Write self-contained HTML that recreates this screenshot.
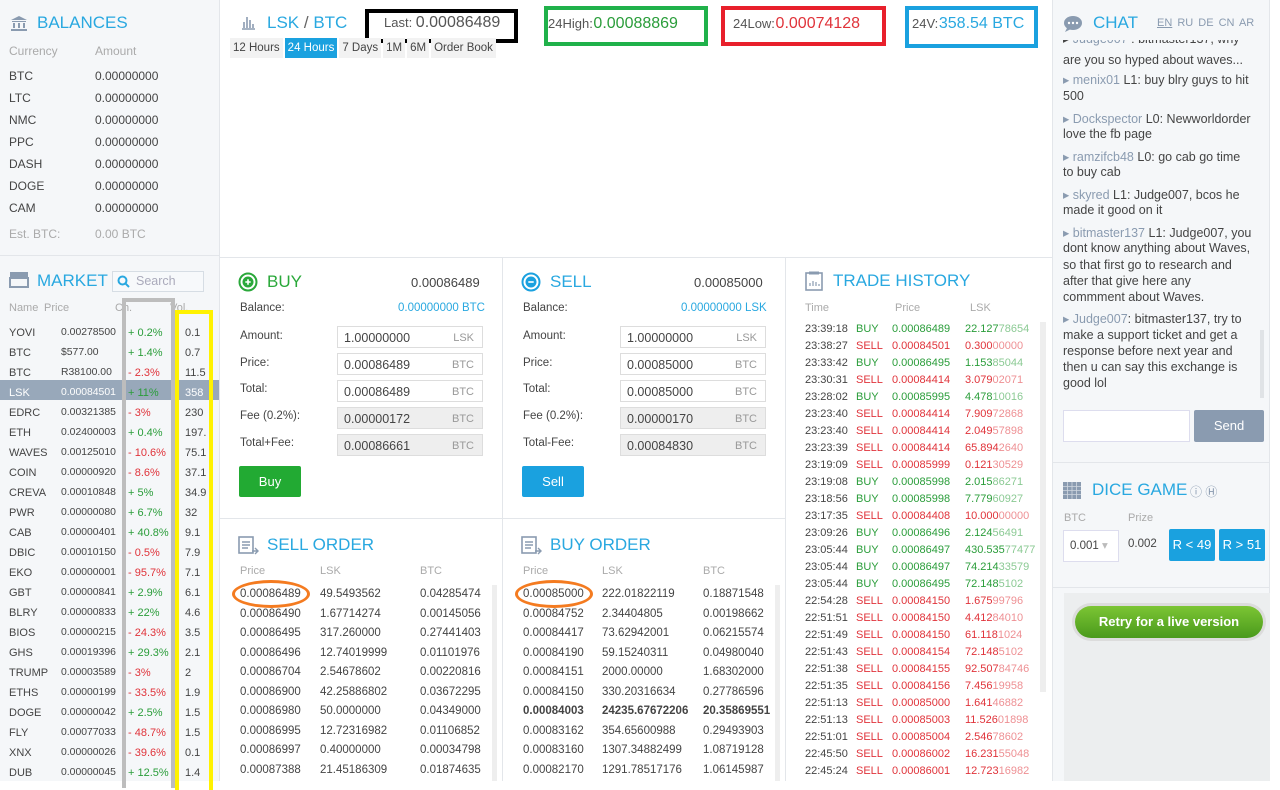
<!DOCTYPE html>
<html><head><meta charset="utf-8"><style>
*{margin:0;padding:0;box-sizing:border-box}
body{width:1280px;height:781px;overflow:hidden;background:#fff;font-family:"Liberation Sans",sans-serif;font-size:12px;color:#444;position:relative}
.a{position:absolute;white-space:nowrap}
.blue{color:#29a8e0}
.g{color:#2a9d3a}.r{color:#e0333a}
.lt{color:#aaa}
.h{font-size:17px;color:#29a8e0}
.inp{position:absolute;border:1px solid #ddd;background:#fff;height:22px;font-size:12.5px;padding:4px 6px;color:#444}
.inp span{position:absolute;right:8px;color:#999;font-size:11px;top:5px}
.inp.d{background:#eee}
.cl{position:absolute;left:1063px;font-size:12.5px;color:#444;white-space:nowrap}
.cl b{font-weight:normal;color:#8a9bb0}
</style></head><body>
<div class="a" style="left:0;top:0;width:220px;height:781px;background:#f5f7f9;border-right:1px solid #e3e6ea"></div>
<div class="a" style="left:0;top:255px;width:220px;height:1px;background:#e3e6ea"></div>
<div class="a" style="left:1052px;top:0;width:218px;height:781px;background:#f5f7f9;border-left:1px solid #e3e6ea;border-right:1px solid #e3e6ea"></div>
<div class="a" style="left:1052px;top:462px;width:218px;height:1px;background:#e3e6ea"></div>
<div class="a" style="left:1052px;top:587px;width:218px;height:1px;background:#e3e6ea"></div>
<div class="a" style="left:1064px;top:593px;width:206px;height:188px;background:#eceeef"></div>
<div class="a" style="left:220px;top:257px;width:832px;height:1px;background:#e3e6ea"></div>
<div class="a" style="left:502px;top:258px;width:1px;height:523px;background:#e3e6ea"></div>
<div class="a" style="left:785px;top:258px;width:1px;height:523px;background:#e3e6ea"></div>
<div class="a" style="left:220px;top:518px;width:565px;height:1px;background:#e3e6ea"></div>

<svg class="a" style="left:10px;top:15px" width="18" height="16"><path d="M1 5 L9 1 L17 5 Z M2 6h14v1H2z M3 8h2v5H3z M8 8h2v5H8z M13 8h2v5h-2z M1 14h16v2H1z" fill="#8a9bb0"/></svg>
<div class="a h" style="left:37px;top:13px">BALANCES</div>
<div class="a lt" style="left:9px;top:44px">Currency</div><div class="a lt" style="left:95px;top:44px">Amount</div>
<div class="a" style="left:9px;top:65px;line-height:22px">BTC<br>LTC<br>NMC<br>PPC<br>DASH<br>DOGE<br>CAM</div>
<div class="a" style="left:95px;top:65px;line-height:22px">0.00000000<br>0.00000000<br>0.00000000<br>0.00000000<br>0.00000000<br>0.00000000<br>0.00000000</div>
<div class="a lt" style="left:9px;top:227px">Est. BTC:</div><div class="a lt" style="left:95px;top:227px">0.00 BTC</div>

<svg class="a" style="left:9px;top:271px" width="20" height="17"><rect x="1" y="1" width="18" height="5" fill="#8a9bb0"/><rect x="1" y="7" width="18" height="9" fill="none" stroke="#8a9bb0" stroke-width="2"/></svg>
<div class="a h" style="left:37px;top:271px">MARKET</div>
<div class="a" style="left:112px;top:271px;width:92px;height:21px;border:1px solid #d6dde4;background:#f7f9fb"></div>
<svg class="a" style="left:117px;top:275px" width="13" height="13"><circle cx="5.5" cy="5.5" r="4" stroke="#29a8e0" stroke-width="2" fill="none"/><path d="M8.5 8.5l3.5 3.5" stroke="#29a8e0" stroke-width="2"/></svg>
<div class="a" style="left:136px;top:274px;color:#aab;font-size:12.5px">Search</div>
<div class="a lt" style="left:9px;top:302px;font-size:11px">Name</div><div class="a lt" style="left:44px;top:302px;font-size:11px">Price</div><div class="a lt" style="left:115px;top:302px;font-size:11px">Ch.</div><div class="a lt" style="left:170px;top:302px;font-size:11px">Vol.</div>
<div class="a" style="left:0;top:380px;width:219px;height:20px;background:#98a8ba"></div>
<div class="a" style="left:122px;top:298px;width:53px;height:490px;border:4px solid #bdbdbd;border-bottom:none"></div>
<div class="a" style="left:175px;top:310px;width:38px;height:480px;border:4px solid #fff200;border-bottom:none"></div>
<div class="a" style="left:9px;top:323px;line-height:20px;font-size:11px">YOVI<br>BTC<br>BTC<br><span style="color:#fff">LSK</span><br>EDRC<br>ETH<br>WAVES<br>COIN<br>CREVA<br>PWR<br>CAB<br>DBIC<br>EKO<br>GBT<br>BLRY<br>BIOS<br>GHS<br>TRUMP<br>ETHS<br>DOGE<br>FLY<br>XNX<br>DUB</div>
<div class="a" style="left:61px;top:323px;line-height:20px;font-size:10.4px">0.00278500<br>$577.00<br>R38100.00<br><span style="color:#fff">0.00084501</span><br>0.00321385<br>0.02400003<br>0.00125010<br>0.00000920<br>0.00010848<br>0.00000080<br>0.00000401<br>0.00010150<br>0.00000001<br>0.00000841<br>0.00000833<br>0.00000215<br>0.00019396<br>0.00003589<br>0.00000199<br>0.00000042<br>0.00077033<br>0.00000026<br>0.00000045</div>
<div class="a" style="left:128px;top:323px;line-height:20px;font-size:11px"><span class="g">+ 0.2%</span><br><span class="g">+ 1.4%</span><br><span class="r">- 2.3%</span><br><span class="g">+ 11%</span><br><span class="r">- 3%</span><br><span class="g">+ 0.4%</span><br><span class="r">- 10.6%</span><br><span class="r">- 8.6%</span><br><span class="g">+ 5%</span><br><span class="g">+ 6.7%</span><br><span class="g">+ 40.8%</span><br><span class="r">- 0.5%</span><br><span class="r">- 95.7%</span><br><span class="g">+ 2.9%</span><br><span class="g">+ 22%</span><br><span class="r">- 24.3%</span><br><span class="g">+ 29.3%</span><br><span class="r">- 3%</span><br><span class="r">- 33.5%</span><br><span class="g">+ 2.5%</span><br><span class="r">- 48.7%</span><br><span class="r">- 39.6%</span><br><span class="g">+ 12.5%</span></div>
<div class="a" style="left:185px;top:323px;line-height:20px;font-size:11px;width:23px;overflow:hidden">0.1<br>0.7<br>11.5<br><span style="color:#fff">358</span><br>230<br>197.<br>75.1<br>37.1<br>34.9<br>32<br>9.1<br>7.9<br>7.1<br>6.1<br>4.6<br>3.5<br>2.1<br>2<br>1.9<br>1.5<br>1.5<br>0.1<br>1.4</div>

<svg class="a" style="left:240px;top:14px" width="16" height="16"><path d="M2 15h13M4 14V8M7 14V3M10 14V6M13 14V10" stroke="#8a9bb0" stroke-width="1.6"/></svg>
<div class="a h" style="left:267px;top:13px">LSK <span style="color:#666">/</span> BTC</div>
<div class="a" style="left:365px;top:9px;width:153px;height:34px;border:4px solid #000"></div>
<div class="a" style="left:384px;top:14px;font-size:13px;color:#555">Last: <span style="font-size:16px">0.00086489</span></div>
<div class="a" style="left:544px;top:6px;width:164px;height:40px;border:4px solid #20b14a"></div>
<div class="a" style="left:548px;top:15px;font-size:13px;color:#555">24High: <span style="font-size:16px;color:#2a9d3a;margin-left:-3px">0.00088869</span></div>
<div class="a" style="left:721px;top:6px;width:165px;height:40px;border:4px solid #e8202b"></div>
<div class="a" style="left:733px;top:15px;font-size:13px;color:#555">24Low: <span style="font-size:16px;color:#e0333a;margin-left:-3px">0.00074128</span></div>
<div class="a" style="left:905px;top:6px;width:133px;height:42px;border:4px solid #1aa1df"></div>
<div class="a" style="left:912px;top:15px;font-size:13px;color:#555">24V: <span style="font-size:16px;color:#29a8e0;margin-left:-3px">358.54 BTC</span></div>
<div class="a" style="left:230px;top:38px;height:20px;font-size:11.5px;line-height:20px;display:flex;gap:2px">
<span style="background:#f2f2f2;padding:0 3px">12 Hours</span><span style="background:#1aa1df;color:#fff;padding:0 3px">24 Hours</span><span style="background:#f2f2f2;padding:0 3px">7 Days</span><span style="background:#f2f2f2;padding:0 3px">1M</span><span style="background:#f2f2f2;padding:0 3px">6M</span><span style="background:#f2f2f2;padding:0 3px">Order Book</span></div>

<svg class="a" style="left:238px;top:272px" width="20" height="20"><circle cx="10" cy="10" r="8.5" fill="none" stroke="#2aa83a" stroke-width="2"/><circle cx="10" cy="10" r="5.5" fill="#2aa83a"/><path d="M10 7.3v5.4M7.3 10h5.4" stroke="#fff" stroke-width="1.6"/></svg>
<div class="a" style="left:267px;top:272px;font-size:17px;color:#2aa83a">BUY</div>
<div class="a" style="left:411px;top:275px;font-size:13px">0.00086489</div>
<div class="a" style="left:240px;top:302px;font-size:11.5px">Balance:</div>
<div class="a blue" style="left:398px;top:302px;font-size:11.5px">0.00000000 BTC</div>
<div class="a" style="left:240px;top:323px;font-size:11.5px;line-height:26.7px">Amount:<br>Price:<br>Total:<br>Fee (0.2%):<br>Total+Fee:</div>
<div class="inp" style="left:337px;top:326px;width:146px">1.00000000<span>LSK</span></div>
<div class="inp" style="left:337px;top:353px;width:146px">0.00086489<span>BTC</span></div>
<div class="inp" style="left:337px;top:380px;width:146px">0.00086489<span>BTC</span></div>
<div class="inp d" style="left:337px;top:407px;width:146px">0.00000172<span>BTC</span></div>
<div class="inp d" style="left:337px;top:434px;width:146px">0.00086661<span>BTC</span></div>
<div class="a" style="left:239px;top:466px;width:62px;height:31px;background:#22aa33;color:#fff;font-size:13px;text-align:center;line-height:31px;border-radius:2px">Buy</div>

<svg class="a" style="left:521px;top:272px" width="20" height="20"><circle cx="10" cy="10" r="8.5" fill="none" stroke="#1aa1df" stroke-width="2"/><circle cx="10" cy="10" r="5.5" fill="#1aa1df"/><path d="M7.3 10h5.4" stroke="#fff" stroke-width="1.6"/></svg>
<div class="a h" style="left:550px;top:272px">SELL</div>
<div class="a" style="left:694px;top:275px;font-size:13px">0.00085000</div>
<div class="a" style="left:523px;top:302px;font-size:11.5px">Balance:</div>
<div class="a blue" style="left:681px;top:302px;font-size:11.5px">0.00000000 LSK</div>
<div class="a" style="left:523px;top:323px;font-size:11.5px;line-height:26.7px">Amount:<br>Price:<br>Total:<br>Fee (0.2%):<br>Total-Fee:</div>
<div class="inp" style="left:620px;top:326px;width:146px">1.00000000<span>LSK</span></div>
<div class="inp" style="left:620px;top:353px;width:146px">0.00085000<span>BTC</span></div>
<div class="inp" style="left:620px;top:380px;width:146px">0.00085000<span>BTC</span></div>
<div class="inp d" style="left:620px;top:407px;width:146px">0.00000170<span>BTC</span></div>
<div class="inp d" style="left:620px;top:434px;width:146px">0.00084830<span>BTC</span></div>
<div class="a" style="left:522px;top:466px;width:62px;height:31px;background:#1aa1df;color:#fff;font-size:13px;text-align:center;line-height:31px;border-radius:2px">Sell</div>

<svg class="a" style="left:238px;top:535px" width="22" height="20"><rect x="1" y="2" width="14" height="16" fill="none" stroke="#8a9bb0" stroke-width="1.6"/><path d="M4 7h8M4 10h8M4 13h6M14 16h6M17 13l3 3-3 3" stroke="#8a9bb0" stroke-width="1.4" fill="none"/></svg>
<div class="a h" style="left:267px;top:535px">SELL ORDER</div>
<div class="a lt" style="left:240px;top:565px;font-size:11px">Price</div><div class="a lt" style="left:320px;top:565px;font-size:11px">LSK</div><div class="a lt" style="left:420px;top:565px;font-size:11px">BTC</div>
<div class="a" style="left:240px;top:585px;line-height:19.5px;font-size:11.5px">0.00086489<br>0.00086490<br>0.00086495<br>0.00086496<br>0.00086704<br>0.00086900<br>0.00086980<br>0.00086995<br>0.00086997<br>0.00087388</div>
<div class="a" style="left:320px;top:585px;line-height:19.5px;font-size:11.5px">49.5493562<br>1.67714274<br>317.260000<br>12.74019999<br>2.54678602<br>42.25886802<br>50.0000000<br>12.72316982<br>0.40000000<br>21.45186309</div>
<div class="a" style="left:420px;top:585px;line-height:19.5px;font-size:11.5px">0.04285474<br>0.00145056<br>0.27441403<br>0.01101976<br>0.00220816<br>0.03672295<br>0.04349000<br>0.01106852<br>0.00034798<br>0.01874635</div>
<div class="a" style="left:232px;top:580px;width:78px;height:28px;border:3px solid #f47b20;border-radius:50%"></div>
<div class="a" style="left:492px;top:585px;width:5px;height:196px;background:#eee"></div>

<svg class="a" style="left:521px;top:535px" width="22" height="20"><rect x="1" y="2" width="14" height="16" fill="none" stroke="#8a9bb0" stroke-width="1.6"/><path d="M4 7h8M4 10h8M4 13h6M14 16h6M17 13l3 3-3 3" stroke="#8a9bb0" stroke-width="1.4" fill="none"/></svg>
<div class="a h" style="left:550px;top:535px">BUY ORDER</div>
<div class="a lt" style="left:523px;top:565px;font-size:11px">Price</div><div class="a lt" style="left:602px;top:565px;font-size:11px">LSK</div><div class="a lt" style="left:703px;top:565px;font-size:11px">BTC</div>
<div class="a" style="left:523px;top:585px;line-height:19.5px;font-size:11.5px">0.00085000<br>0.00084752<br>0.00084417<br>0.00084190<br>0.00084151<br>0.00084150<br><b>0.00084003</b><br>0.00083162<br>0.00083160<br>0.00082170</div>
<div class="a" style="left:602px;top:585px;line-height:19.5px;font-size:11.5px">222.01822119<br>2.34404805<br>73.62942001<br>59.15240311<br>2000.00000<br>330.20316634<br><b>24235.67672206</b><br>354.65600988<br>1307.34882499<br>1291.78517176</div>
<div class="a" style="left:703px;top:585px;line-height:19.5px;font-size:11.5px">0.18871548<br>0.00198662<br>0.06215574<br>0.04980040<br>1.68302000<br>0.27786596<br><b>20.35869551</b><br>0.29493903<br>1.08719128<br>1.06145987</div>
<div class="a" style="left:515px;top:580px;width:78px;height:28px;border:3px solid #f47b20;border-radius:50%"></div>
<div class="a" style="left:775px;top:585px;width:5px;height:196px;background:#eee"></div>

<svg class="a" style="left:805px;top:271px" width="18" height="20"><rect x="1" y="2" width="16" height="17" fill="none" stroke="#8a9bb0" stroke-width="1.6"/><rect x="4" y="0.5" width="10" height="3" fill="#8a9bb0"/><path d="M5 15v-3M8 15v-5M11 15v-4M14 15v-2" stroke="#8a9bb0" stroke-width="1.2"/></svg>
<div class="a h" style="left:833px;top:271px">TRADE HISTORY</div>
<div class="a lt" style="left:805px;top:302px;font-size:11px">Time</div><div class="a lt" style="left:895px;top:302px;font-size:11px">Price</div><div class="a lt" style="left:970px;top:302px;font-size:11px">LSK</div>
<div class="a" style="left:805px;top:321px;line-height:17px;font-size:11px">23:39:18<br>23:38:27<br>23:33:42<br>23:30:31<br>23:28:02<br>23:23:40<br>23:23:40<br>23:23:39<br>23:19:09<br>23:19:08<br>23:18:56<br>23:17:35<br>23:09:26<br>23:05:44<br>23:05:44<br>23:05:44<br>22:54:28<br>22:51:51<br>22:51:49<br>22:51:43<br>22:51:38<br>22:51:35<br>22:51:13<br>22:51:13<br>22:51:01<br>22:45:50<br>22:45:24</div>
<div class="a" style="left:856px;top:321px;line-height:17px;font-size:11px"><span class="g">BUY</span><br><span class="r">SELL</span><br><span class="g">BUY</span><br><span class="r">SELL</span><br><span class="g">BUY</span><br><span class="r">SELL</span><br><span class="r">SELL</span><br><span class="r">SELL</span><br><span class="r">SELL</span><br><span class="g">BUY</span><br><span class="g">BUY</span><br><span class="r">SELL</span><br><span class="g">BUY</span><br><span class="g">BUY</span><br><span class="g">BUY</span><br><span class="g">BUY</span><br><span class="r">SELL</span><br><span class="r">SELL</span><br><span class="r">SELL</span><br><span class="r">SELL</span><br><span class="r">SELL</span><br><span class="r">SELL</span><br><span class="r">SELL</span><br><span class="r">SELL</span><br><span class="r">SELL</span><br><span class="r">SELL</span><br><span class="r">SELL</span></div>
<div class="a" style="left:892px;top:321px;line-height:17px;font-size:11px"><span class="g">0.00086489</span><br><span class="r">0.00084501</span><br><span class="g">0.00086495</span><br><span class="r">0.00084414</span><br><span class="g">0.00085995</span><br><span class="r">0.00084414</span><br><span class="r">0.00084414</span><br><span class="r">0.00084414</span><br><span class="r">0.00085999</span><br><span class="g">0.00085998</span><br><span class="g">0.00085998</span><br><span class="r">0.00084408</span><br><span class="g">0.00086496</span><br><span class="g">0.00086497</span><br><span class="g">0.00086497</span><br><span class="g">0.00086495</span><br><span class="r">0.00084150</span><br><span class="r">0.00084150</span><br><span class="r">0.00084150</span><br><span class="r">0.00084154</span><br><span class="r">0.00084155</span><br><span class="r">0.00084156</span><br><span class="r">0.00085000</span><br><span class="r">0.00085003</span><br><span class="r">0.00085004</span><br><span class="r">0.00086002</span><br><span class="r">0.00086001</span></div>
<div class="a" style="left:965px;top:321px;line-height:17px;font-size:11px;width:72px;overflow:hidden">
<span class="g">22.127<span style="opacity:.55">78654</span></span><br><span class="r">0.300<span style="opacity:.55">00000</span></span><br><span class="g">1.153<span style="opacity:.55">85044</span></span><br><span class="r">3.079<span style="opacity:.55">02071</span></span><br><span class="g">4.478<span style="opacity:.55">10016</span></span><br><span class="r">7.909<span style="opacity:.55">72868</span></span><br><span class="r">2.049<span style="opacity:.55">57898</span></span><br><span class="r">65.894<span style="opacity:.55">2640</span></span><br><span class="r">0.121<span style="opacity:.55">30529</span></span><br><span class="g">2.015<span style="opacity:.55">86271</span></span><br><span class="g">7.779<span style="opacity:.55">60927</span></span><br><span class="r">10.000<span style="opacity:.55">00000</span></span><br><span class="g">2.124<span style="opacity:.55">56491</span></span><br><span class="g">430.535<span style="opacity:.55">77477</span></span><br><span class="g">74.214<span style="opacity:.55">33579</span></span><br><span class="g">72.148<span style="opacity:.55">5102</span></span><br><span class="r">1.675<span style="opacity:.55">99796</span></span><br><span class="r">4.412<span style="opacity:.55">84010</span></span><br><span class="r">61.118<span style="opacity:.55">1024</span></span><br><span class="r">72.148<span style="opacity:.55">5102</span></span><br><span class="r">92.507<span style="opacity:.55">84746</span></span><br><span class="r">7.456<span style="opacity:.55">19958</span></span><br><span class="r">1.641<span style="opacity:.55">46882</span></span><br><span class="r">11.526<span style="opacity:.55">01898</span></span><br><span class="r">2.546<span style="opacity:.55">78602</span></span><br><span class="r">16.231<span style="opacity:.55">55048</span></span><br><span class="r">12.723<span style="opacity:.55">16982</span></span></div>
<div class="a" style="left:1040px;top:322px;width:6px;height:370px;background:#eee"></div>

<svg class="a" style="left:1063px;top:15px" width="20" height="18"><ellipse cx="10" cy="8" rx="9" ry="7" fill="#8a9bb0"/><path d="M4 13l-2 4 6-3z" fill="#8a9bb0"/><circle cx="6" cy="8" r="1.2" fill="#fff"/><circle cx="10" cy="8" r="1.2" fill="#fff"/><circle cx="14" cy="8" r="1.2" fill="#fff"/></svg>
<div class="a h" style="left:1093px;top:13px">CHAT</div>
<div class="a" style="left:1157px;top:17px;font-size:11px;color:#8a9bb0;word-spacing:2px"><u>EN</u> RU DE CN AR</div>
<div class="a" style="left:1052px;top:40px;width:210px;height:6px;overflow:hidden"><div class="cl" style="left:11px;top:-9px">▸ <b>Judge007</b> : bitmaster137, why</div></div>
<div class="cl" style="top:53px">are you so hyped about waves...</div>
<div class="cl" style="top:72px"><b>▸ menix01</b> L1: buy blry guys to hit</div>
<div class="cl" style="top:89px">500</div>
<div class="cl" style="top:111px"><b>▸ Dockspector</b> L0: Newworldorder</div>
<div class="cl" style="top:127px">love the fb page</div>
<div class="cl" style="top:149px"><b>▸ ramzifcb48</b> L0: go cab go time</div>
<div class="cl" style="top:165px">to buy cab</div>
<div class="cl" style="top:187px"><b>▸ skyred</b> L1: Judge007, bcos he</div>
<div class="cl" style="top:203px">made it good on it</div>
<div class="cl" style="top:225px"><b>▸ bitmaster137</b> L1: Judge007, you</div>
<div class="cl" style="top:241px">dont know anything about Waves,</div>
<div class="cl" style="top:258px">so that first go to research and</div>
<div class="cl" style="top:274px">after that give here any</div>
<div class="cl" style="top:290px">commment about Waves.</div>
<div class="cl" style="top:311px"><b>▸ Judge007</b>: bitmaster137, try to</div>
<div class="cl" style="top:328px">make a support ticket and get a</div>
<div class="cl" style="top:344px">response before next year and</div>
<div class="cl" style="top:360px">then u can say this exchange is</div>
<div class="cl" style="top:376px">good lol</div>
<div class="a" style="left:1260px;top:330px;width:4px;height:68px;background:#e0e3e6"></div>
<div class="a" style="left:1063px;top:410px;width:127px;height:32px;background:#fff;border:1px solid #dde"></div>
<div class="a" style="left:1194px;top:410px;width:70px;height:32px;background:#8a9bb0;color:#fff;font-size:13px;text-align:center;line-height:32px;border-radius:2px">Send</div>

<svg class="a" style="left:1063px;top:482px" width="18" height="17"><rect width="18" height="17" fill="#8a9bb0"/><path d="M0 4.5h18M0 8.5h18M0 12.5h18M4.5 0v17M9 0v17M13.5 0v17" stroke="#d0d8e0" stroke-width="0.8"/></svg>
<div class="a h" style="left:1092px;top:480px">DICE GAME</div>
<div class="a" style="left:1190px;top:483px;font-size:12px;color:#8a9bb0">ⓘ Ⓗ</div>
<div class="a lt" style="left:1064px;top:512px;font-size:11px">BTC</div><div class="a lt" style="left:1128px;top:512px;font-size:11px">Prize</div>
<div class="a" style="left:1063px;top:530px;width:56px;height:32px;background:#fff;border:1px solid #dde;font-size:11.5px;line-height:30px;padding-left:6px">0.001 <span style="color:#bbb">▾</span></div>
<div class="a" style="left:1128px;top:538px;font-size:11.5px">0.002</div>
<div class="a" style="left:1169px;top:529px;width:46px;height:32px;background:#1aa1df;color:#fff;font-size:13px;text-align:center;line-height:32px;border-radius:2px">R &lt; 49</div>
<div class="a" style="left:1219px;top:529px;width:46px;height:32px;background:#1aa1df;color:#fff;font-size:13px;text-align:center;line-height:32px;border-radius:2px">R &gt; 51</div>
<div class="a" style="left:1075px;top:606px;width:188px;height:32px;border-radius:16px;background:linear-gradient(#7cc534,#4a9a1c);color:#fff;font-weight:bold;font-size:13px;text-align:center;line-height:32px;box-shadow:0 0 0 3px #dcdcdc">Retry for a live version</div>
</body></html>
